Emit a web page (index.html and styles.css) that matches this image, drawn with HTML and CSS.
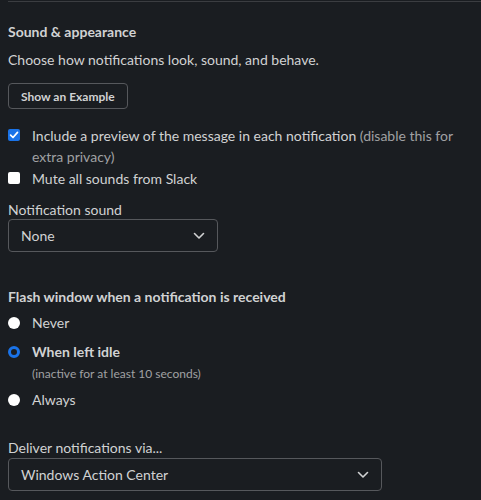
FILE: index.html
```html
<!DOCTYPE html>
<html>
<head>
<meta charset="utf-8">
<link rel="stylesheet" href="styles.css">
</head>
<body>
<div class="panel">
  <div class="rule"></div>
  <h2 class="heading">Sound &amp; appearance</h2>
  <p class="desc">Choose how notifications look, sound, and behave.</p>
  <button class="btn">Show an Example</button>

  <div class="checks">
    <label class="check">
      <span class="box on"><svg viewBox="0 0 12 12" width="12" height="12"><path d="M2.6 6.2 L5 8.5 L9.5 3.4" fill="none" stroke="#fff" stroke-width="1.7" stroke-linecap="round" stroke-linejoin="round"/></svg></span>
      <span class="ctext">Include a preview of the message in each notification <span class="muted">(disable this for extra privacy)</span></span>
    </label>
    <label class="check">
      <span class="box"></span>
      <span class="ctext">Mute all sounds from Slack</span>
    </label>
  </div>

  <div class="field">
    <div class="label">Notification sound</div>
    <div class="select small"><span>None</span><svg class="chev" viewBox="0 0 12 8" width="12" height="8"><path d="M1.5 1.5 L6 6 L10.5 1.5" fill="none" stroke="#d1d2d3" stroke-width="1.6" stroke-linecap="round" stroke-linejoin="round"/></svg></div>
  </div>

  <h3 class="subhead">Flash window when a notification is received</h3>
  <div class="radios">
    <div class="radio first"><span class="dot"></span><span class="rtext">Never</span></div>
    <div class="radio sel"><span class="dot"></span><span class="rtext bold">When left idle</span></div>
    <div class="hint">(inactive for at least 10 seconds)</div>
    <div class="radio last"><span class="dot"></span><span class="rtext">Always</span></div>
  </div>

  <div class="field deliver">
    <div class="label">Deliver notifications via...</div>
    <div class="select wide"><span>Windows Action Center</span><svg class="chev" viewBox="0 0 12 8" width="12" height="8"><path d="M1.5 1.5 L6 6 L10.5 1.5" fill="none" stroke="#d1d2d3" stroke-width="1.6" stroke-linecap="round" stroke-linejoin="round"/></svg></div>
  </div>
</div>
</body>
</html>
```
FILE: styles.css
```css
html, body {
  margin: 0;
  padding: 0;
  background: #1a1d21;
}
body {
  font-family: Lato, "Noto Sans", sans-serif;
  color: #d1d2d3;
  font-size: 14px;
  line-height: 20px;
}
.panel {
  padding: 1px 0 0 8px;
}
.rule {
  height: 1px;
  background: #3b3d41;
}
.heading {
  margin: 20px 0 0;
  font-size: 14px;
  font-weight: 700;
  line-height: 20px;
}
.desc {
  margin: 8px 0 0;
}
.btn {
  margin-top: 13px;
  height: 26px;
  padding: 0 12px;
  background: transparent;
  border: 1px solid #56585c;
  border-radius: 4px;
  color: #d1d2d3;
  font-family: Lato, "Noto Sans", sans-serif;
  font-size: 12px;
  font-weight: 700;
  display: block;
}
.checks {
  margin-top: 16px;
  display: flex;
  flex-direction: column;
  gap: 1px;
}
.check {
  display: flex;
  align-items: flex-start;
  gap: 12px;
}
.box {
  flex: none;
  width: 12px;
  height: 12px;
  margin-top: 4px;
  background: #fff;
  border-radius: 2px;
  display: flex;
  align-items: center;
  justify-content: center;
}
.box.on {
  background: #1a73e8;
}
.ctext {
  line-height: 21px;
}
.muted {
  color: #a0a1a3;
}
.field {
  margin-top: 11px;
}
.label {
  line-height: 20px;
}
.select {
  margin-top: -1px;
  height: 33px;
  box-sizing: border-box;
  border: 1px solid #56585c;
  border-radius: 4px;
  display: flex;
  align-items: center;
  justify-content: space-between;
  padding: 0 12px;
}
.select.small { width: 210px; }
.select.wide { width: 374px; margin-top: 0; }
.chev { display: block; }
.subhead {
  margin: 35px 0 0;
  font-size: 14px;
  font-weight: 700;
  line-height: 20px;
}
.radio {
  display: flex;
  align-items: center;
  gap: 12px;
  height: 20px;
  margin-top: 9px;
}
.radio.first { margin-top: 6px; }
.radio.last { margin-top: 7px; }
.dot {
  width: 12px;
  height: 12px;
  border-radius: 50%;
  background: #fff;
  box-sizing: border-box;
}
.radio.sel .dot {
  background: #1a1d21;
  border: 3px solid #1a73e8;
}
.bold { font-weight: 700; }
.hint {
  padding-left: 24px;
  font-size: 12px;
  line-height: 18px;
  color: #a0a1a3;
  margin-top: 3px;
}
.deliver {
  margin-top: 28px;
}
```
